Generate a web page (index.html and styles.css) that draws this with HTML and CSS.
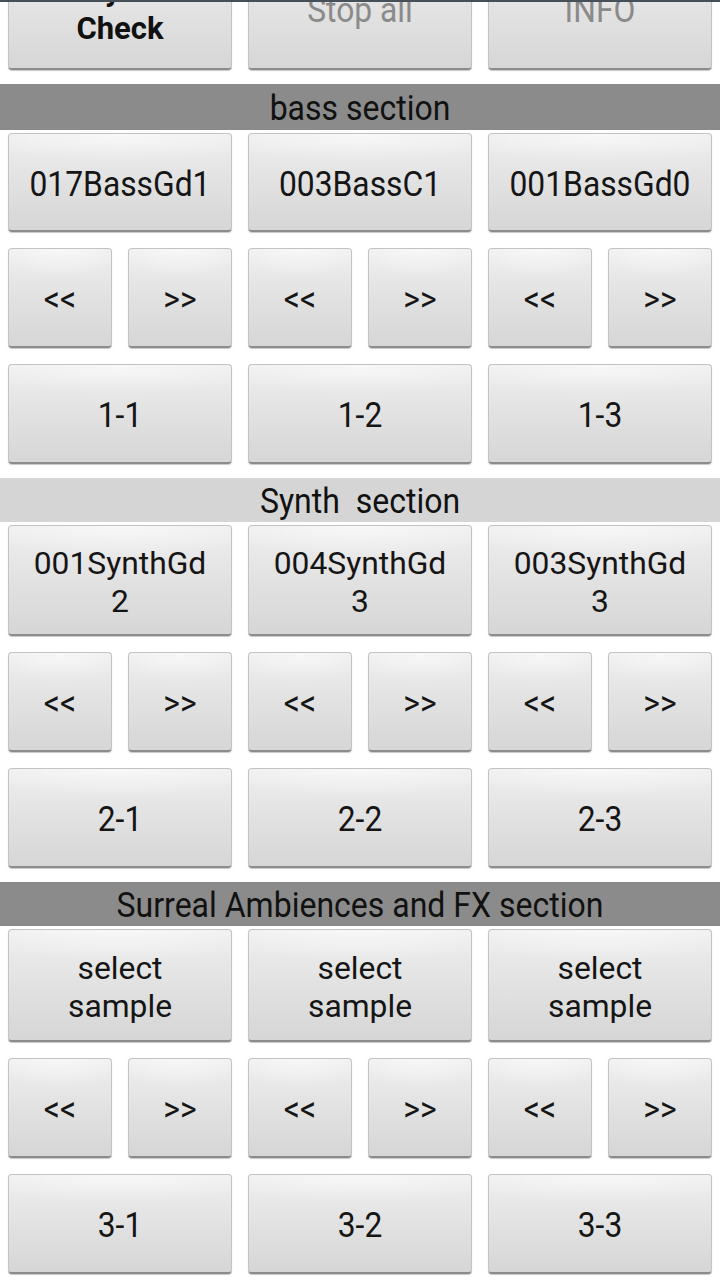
FILE: index.html
```html
<!DOCTYPE html>
<html>
<head>
<meta charset="utf-8">
<link rel="stylesheet" href="styles.css">
</head>
<body>
<div class="screen">
  <div class="topbar"></div>

  <div class="top row">
    <div class="btn bold two"><span class="label">Sync<br>Check</span></div>
    <div class="btn dim"><span class="label">Stop all</span></div>
    <div class="btn dim"><span class="label">INFO</span></div>
  </div>

  <div class="header dark"><span class="label">bass section</span></div>
  <div class="section">
    <div class="row names n1">
      <div class="btn"><span class="label">017BassGd1</span></div>
      <div class="btn"><span class="label">003BassC1</span></div>
      <div class="btn"><span class="label">001BassGd0</span></div>
    </div>
    <div class="row six">
      <div class="btn"><span class="label">&lt;&lt;</span></div>
      <div class="btn"><span class="label">&gt;&gt;</span></div>
      <div class="btn"><span class="label">&lt;&lt;</span></div>
      <div class="btn"><span class="label">&gt;&gt;</span></div>
      <div class="btn"><span class="label">&lt;&lt;</span></div>
      <div class="btn"><span class="label">&gt;&gt;</span></div>
    </div>
    <div class="row">
      <div class="btn"><span class="label">1-1</span></div>
      <div class="btn"><span class="label">1-2</span></div>
      <div class="btn"><span class="label">1-3</span></div>
    </div>
  </div>

  <div class="header light short"><span class="label">Synth &nbsp;section</span></div>
  <div class="section">
    <div class="row names n2">
      <div class="btn two"><span class="label">001SynthGd<br>2</span></div>
      <div class="btn two"><span class="label">004SynthGd<br>3</span></div>
      <div class="btn two"><span class="label">003SynthGd<br>3</span></div>
    </div>
    <div class="row six">
      <div class="btn"><span class="label">&lt;&lt;</span></div>
      <div class="btn"><span class="label">&gt;&gt;</span></div>
      <div class="btn"><span class="label">&lt;&lt;</span></div>
      <div class="btn"><span class="label">&gt;&gt;</span></div>
      <div class="btn"><span class="label">&lt;&lt;</span></div>
      <div class="btn"><span class="label">&gt;&gt;</span></div>
    </div>
    <div class="row">
      <div class="btn"><span class="label">2-1</span></div>
      <div class="btn"><span class="label">2-2</span></div>
      <div class="btn"><span class="label">2-3</span></div>
    </div>
  </div>

  <div class="header dark short"><span class="label">Surreal Ambiences and FX section</span></div>
  <div class="section">
    <div class="row names n3">
      <div class="btn two"><span class="label">select<br>sample</span></div>
      <div class="btn two"><span class="label">select<br>sample</span></div>
      <div class="btn two"><span class="label">select<br>sample</span></div>
    </div>
    <div class="row six">
      <div class="btn"><span class="label">&lt;&lt;</span></div>
      <div class="btn"><span class="label">&gt;&gt;</span></div>
      <div class="btn"><span class="label">&lt;&lt;</span></div>
      <div class="btn"><span class="label">&gt;&gt;</span></div>
      <div class="btn"><span class="label">&lt;&lt;</span></div>
      <div class="btn"><span class="label">&gt;&gt;</span></div>
    </div>
    <div class="row">
      <div class="btn"><span class="label">3-1</span></div>
      <div class="btn"><span class="label">3-2</span></div>
      <div class="btn"><span class="label">3-3</span></div>
    </div>
  </div>
</div>
</body>
</html>
```

FILE: styles.css
```css
* { box-sizing: border-box; }

html, body {
  margin: 0;
  padding: 0;
  background: #ffffff;
}

body {
  font-family: Roboto, "Noto Sans", "Liberation Sans", sans-serif;
  color: #151515;
}

.screen {
  position: relative;
  width: 720px;
  height: 1280px;
  overflow: hidden;
  background: #ffffff;
}

.topbar {
  position: absolute;
  top: 0;
  left: 0;
  right: 0;
  height: 2px;
  background: #46505a;
  z-index: 2;
}

.label {
  display: inline-block;
  transform: scaleY(1.12);
}

.row {
  display: grid;
  grid-template-columns: repeat(3, 1fr);
  column-gap: 16px;
  padding: 0 8px;
}

.row.six {
  grid-template-columns: repeat(6, 1fr);
}

.btn {
  height: 100px;
  display: flex;
  align-items: center;
  justify-content: center;
  text-align: center;
  font-size: 31.8px;
  line-height: 34px;
  color: #151515;
  padding-top: 3px;
  background:
    radial-gradient(ellipse 70% 30% at 50% 0%, rgba(255,255,255,0.55), rgba(255,255,255,0) 100%),
    linear-gradient(#efefef, #e3e3e3 45%, #d6d6d6);
  border: 1px solid #c3c3c3;
  border-bottom: 2px solid #8c8c8c;
  border-radius: 4px;
  box-shadow: 0 1px 1px rgba(0, 0, 0, 0.22);
}

.btn.two {
  line-height: 38px;
}

.btn.two .label {
  transform: none;
}

.top {
  margin-top: -42px;
  padding-bottom: 14px;
}

.top .btn {
  height: 112px;
  padding-top: 0;
  padding-bottom: 8px;
}

.bold {
  font-weight: 700;
  font-size: 31px;
  color: #111111;
}

.dim {
  color: #8a8a8a;
}

.header {
  height: 46px;
  display: flex;
  align-items: center;
  justify-content: center;
  font-size: 32px;
  padding-top: 2px;
  color: #111111;
}

.header.short {
  height: 44px;
}

.header.dark {
  background: #8b8b8b;
}

.header.light {
  background: #d5d5d5;
}

.section {
  display: flex;
  flex-direction: column;
  gap: 16px;
  padding: 3px 0 14px;
}

.names.n1 .btn { height: 99px; }
.names.n2 .btn { height: 111px; }
.names.n3 .btn { height: 113px; }
```
